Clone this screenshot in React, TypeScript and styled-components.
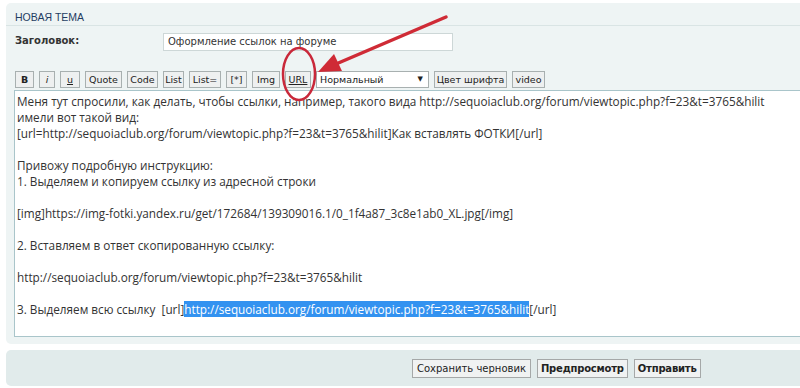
import React from "react";
import styled, { createGlobalStyle } from "styled-components";

const GlobalStyle = createGlobalStyle`
  html, body {
    margin: 0;
    padding: 0;
    background: #ffffff;
    overflow: hidden;
  }
`;

const toolbarButtons = [
  { label: "B", w: 19, kind: "bold" },
  { label: "i", w: 16, kind: "italic" },
  { label: "u", w: 20, kind: "underline" },
  { label: "Quote", w: 37 },
  { label: "Code", w: 31 },
  { label: "List", w: 21 },
  { label: "List=", w: 32 },
  { label: "[*]", w: 21 },
  { label: "Img", w: 28 },
  { label: "URL", w: 26, kind: "underline" },
];

const lines: string[] = [
  "Меня тут спросили, как делать, чтобы ссылки, например, такого вида http://sequoiaclub.org/forum/viewtopic.php?f=23&t=3765&hilit",
  "имели вот такой вид:",
  "[url=http://sequoiaclub.org/forum/viewtopic.php?f=23&t=3765&hilit]Как вставлять ФОТКИ[/url]",
  "",
  "Привожу подробную инструкцию:",
  "1. Выделяем и копируем ссылку из адресной строки",
  "",
  "[img]https://img-fotki.yandex.ru/get/172684/139309016.1/0_1f4a87_3c8e1ab0_XL.jpg[/img]",
  "",
  "2. Вставляем в ответ скопированную ссылку:",
  "",
  "http://sequoiaclub.org/forum/viewtopic.php?f=23&t=3765&hilit",
  "",
];

const App: React.FC = () => {
  return (
    <Page>
      <GlobalStyle />
      <Panel>
        <PanelHeader>Новая тема</PanelHeader>
        <TitleRow>
          <FieldLabel>Заголовок:</FieldLabel>
          <TitleInput>Оформление ссылок на форуме</TitleInput>
        </TitleRow>
        <Toolbar>
          {toolbarButtons.map((b) => (
            <ToolButton key={b.label} $w={b.w} $kind={b.kind}>
              {b.label}
            </ToolButton>
          ))}
          <SizeSelect>
            <span>Нормальный</span>
            <SelectArrow>▼</SelectArrow>
          </SizeSelect>
          <ToolButton $w={73}>Цвет шрифта</ToolButton>
          <ToolButton $w={33}>video</ToolButton>
        </Toolbar>
        <Editor>
          {lines.map((l, i) => (
            <EditorLine key={i}>{l}</EditorLine>
          ))}
          <EditorLine>
            3. Выделяем всю ссылку{"  "}[url]
            <Selected>http://sequoiaclub.org/forum/viewtopic.php?f=23&t=3765&hilit</Selected>
            [/url]
          </EditorLine>
        </Editor>
      </Panel>
      <ActionBar>
        <ActionButton>Сохранить черновик</ActionButton>
        <ActionButton $primary>Предпросмотр</ActionButton>
        <ActionButton $primary>Отправить</ActionButton>
      </ActionBar>
      <Annotation width="800" height="388" viewBox="0 0 800 388">
        <line x1="446" y1="17" x2="336" y2="64" stroke="#cf2b36" strokeWidth="3.5" strokeLinecap="round" />
        <polygon points="318,72 342,71 334,54" fill="#cf2b36" />
        <ellipse cx="299" cy="74" rx="16" ry="26" fill="none" stroke="#c9283a" strokeWidth="2.5" />
      </Annotation>
    </Page>
  );
};

const Page = styled.div`
  position: relative;
  width: 820px;
  height: 388px;
  padding: 3px 0 0 6px;
  box-sizing: border-box;
`;

const Panel = styled.div`
  background: #eef4f4;
  border-radius: 5px;
  padding-bottom: 7px;
`;

const PanelHeader = styled.div`
  height: 23px;
  box-sizing: border-box;
  padding: 8px 0 0 9px;
  font: 10.5px/12px "Liberation Sans", Arial, sans-serif;
  text-transform: uppercase;
  color: #1f3d62;
  border-bottom: 1px solid #d9e4e4;
`;

const TitleRow = styled.div`
  display: flex;
  align-items: center;
  margin-top: 7px;
  padding-left: 9px;
`;

const FieldLabel = styled.div`
  width: 148px;
  font: bold 10px "DejaVu Sans", Verdana, sans-serif;
  color: #333333;
  margin-top: -3px;
`;

const TitleInput = styled.div`
  width: 290px;
  height: 18px;
  box-sizing: border-box;
  padding: 0 4px;
  background: #ffffff;
  border: 1px solid #cdd7d7;
  font: 10px/16px "DejaVu Sans", Verdana, sans-serif;
  color: #333333;
`;

const Toolbar = styled.div`
  display: flex;
  align-items: center;
  gap: 5px;
  margin-top: 20px;
  padding-left: 9px;
`;

const ToolButton = styled.div<{ $w: number; $kind?: string }>`
  width: ${(p) => p.$w}px;
  height: 17px;
  box-sizing: border-box;
  border: 1px solid #a8b0b0;
  background: #eef0f0;
  display: flex;
  align-items: center;
  justify-content: center;
  white-space: nowrap;
  font: 9.5px/15px "DejaVu Sans", Verdana, sans-serif;
  color: #222222;
  font-weight: ${(p) => (p.$kind === "bold" ? "bold" : "normal")};
  font-style: ${(p) => (p.$kind === "italic" ? "italic" : "normal")};
  text-decoration: ${(p) => (p.$kind === "underline" ? "underline" : "none")};
`;

const SizeSelect = styled.div`
  width: 113px;
  height: 17px;
  box-sizing: border-box;
  border: 1px solid #a8b0b0;
  background: #ffffff;
  display: flex;
  align-items: center;
  justify-content: space-between;
  padding: 0 5px 0 3px;
  font: 9.5px/15px "DejaVu Sans", Verdana, sans-serif;
  color: #222222;
`;

const SelectArrow = styled.span`
  font-size: 7px;
`;

const Editor = styled.div`
  margin: 2px 0 0 8px;
  height: 247px;
  box-sizing: border-box;
  padding: 2px 2px;
  background: #ffffff;
  border: 1px solid #a9c5ca;
  border-right: none;
  font: 11.75px/16px "Open Sans", "Noto Sans", sans-serif;
  color: #333333;
`;

const EditorLine = styled.div`
  min-height: 16px;
  white-space: pre;
`;

const Selected = styled.span`
  background: #3392f0;
  color: #ffffff;
`;

const ActionBar = styled.div`
  margin-top: 6px;
  height: 36px;
  background: #e1ebeb;
  border-radius: 5px;
  display: flex;
  align-items: center;
  gap: 6px;
  padding-left: 406px;
`;

const ActionButton = styled.div<{ $primary?: boolean }>`
  height: 19px;
  box-sizing: border-box;
  padding: 0 ${(p) => (p.$primary ? 3 : 4)}px;
  border: 1px solid #a5a8a8;
  background: #f0f2f2;
  display: flex;
  align-items: center;
  white-space: nowrap;
  font: 10px/17px "DejaVu Sans", Verdana, sans-serif;
  font-weight: ${(p) => (p.$primary ? "bold" : "normal")};
  letter-spacing: ${(p) => (p.$primary ? "-0.2px" : "0")};
  color: #222222;
`;

const Annotation = styled.svg`
  position: absolute;
  top: 0;
  left: 0;
  pointer-events: none;
`;

export default App;
